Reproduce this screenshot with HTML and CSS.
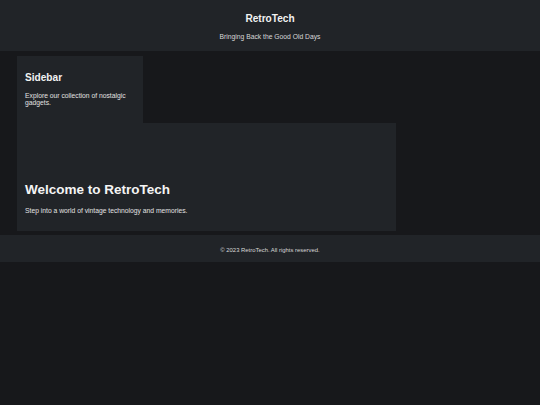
FILE: index.html
```html
<!DOCTYPE html>
<html lang="en">
<head>
<meta charset="utf-8">
<title>RetroTech</title>
<link rel="stylesheet" href="styles.css">
</head>
<body>
<header class="site-header">
  <h1 class="site-title">RetroTech</h1>
  <p class="site-tagline">Bringing Back the Good Old Days</p>
</header>
<div class="layout">
  <aside class="sidebar">
    <h2 class="sidebar-title">Sidebar</h2>
    <p class="text">Explore our collection of nostalgic gadgets.</p>
  </aside>
  <main class="main">
    <h1 class="main-title">Welcome to RetroTech</h1>
    <p class="text">Step into a world of vintage technology and memories.</p>
  </main>
</div>
<footer class="site-footer">
  <p class="footer-text">&copy; 2023 RetroTech. All rights reserved.</p>
</footer>
</body>
</html>
```
FILE: styles.css
```css
html, body {
  margin: 0;
  padding: 0;
}
body {
  background: #17181b;
  color: #e2e2e2;
  font-family: "Liberation Sans", Arial, sans-serif;
  font-size: 6.75px;
  line-height: 7.3px;
  height: 405px;
}
.site-header {
  background: #212428;
  text-align: center;
  padding: 13px 0 10.2px;
}
.site-title {
  margin: 0;
  font-size: 10.125px;
  line-height: 12px;
  font-weight: bold;
  color: #f2f2f2;
}
.site-tagline {
  margin: 7.8px 0 0;
  line-height: 8px;
  color: #d8d8d8;
}
.layout {
  display: flex;
  flex-direction: column;
  align-items: flex-start;
  padding: 5px 17px 0;
}
.sidebar {
  background: #212428;
  width: 126px;
  box-sizing: border-box;
  padding: 8px;
}
.sidebar-title {
  margin: 8.4px 0 8.15px;
  font-size: 10.125px;
  line-height: 11.6px;
  font-weight: bold;
  color: #f2f2f2;
}
.text {
  margin: 0;
}
.sidebar .text {
  margin-bottom: 8.25px;
}
.main {
  background: #212428;
  width: 379px;
  box-sizing: border-box;
  padding: 59.5px 8px 8px;
}
.main-title {
  margin: 0 0 9.35px;
  font-size: 13.5px;
  line-height: 15.5px;
  font-weight: bold;
  color: #f4f4f4;
}
.main .text {
  margin-bottom: 8.3px;
}
.site-footer {
  background: #212428;
  margin-top: 4.5px;
  padding: 11.3px 0 8.9px;
  text-align: center;
}
.footer-text {
  margin: 0;
  font-size: 5.9px;
  line-height: 6.8px;
  color: #d8d8d8;
}
```
